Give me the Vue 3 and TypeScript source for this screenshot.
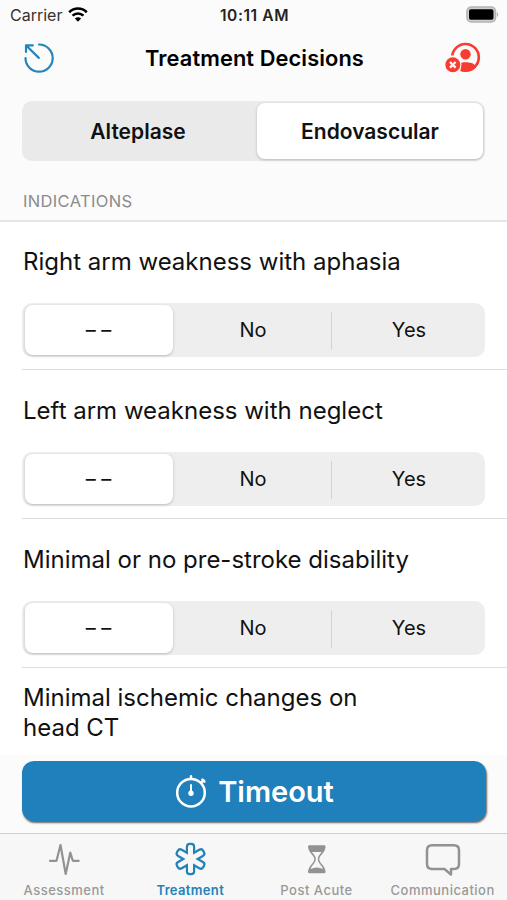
<script setup lang="ts">
import { ref } from 'vue'

const treatments = ['Alteplase', 'Endovascular']
const activeTreatment = ref('Endovascular')

interface Question {
  id: string
  lines: string[]
  answer: string
}

const options = ['– –', 'No', 'Yes']
const questions = ref<Question[]>([
  { id: 'right', lines: ['Right arm weakness with aphasia'], answer: '– –' },
  { id: 'left', lines: ['Left arm weakness with neglect'], answer: '– –' },
  { id: 'disability', lines: ['Minimal or no pre-stroke disability'], answer: '– –' },
])

const tabs = ['Assessment', 'Treatment', 'Post Acute', 'Communication']
const activeTab = ref('Treatment')
</script>

<template>
  <div class="screen">
    <header class="status">
      <div class="carrier">
        <span>Carrier</span>
        <svg class="wifi" width="20" height="16" viewBox="0 0 20 16">
          <path d="M1.200 5.200C6.300.3 13.700.3 18.800 5.200" fill="none" stroke="#000" stroke-width="2.600" />
          <path d="M4.500 8.700C7.700 5.700 12.300 5.700 15.500 8.700" fill="none" stroke="#000" stroke-width="2.500" />
          <path d="M6.900 11.500C8.700 9.900 11.300 9.900 13.100 11.500L10 14.800Z" fill="#000" />
        </svg>
      </div>
      <span class="clock">10:11 AM</span>
      <svg class="battery" width="33" height="17" viewBox="0 0 33 17">
        <rect x="1" y="1" width="28.500" height="15" rx="4.300" fill="#d0d0d0" stroke="#b3b3b3" stroke-width="1.600" />
        <rect x="3" y="3.200" width="24.500" height="10.600" rx="1.800" fill="#000" />
        <path d="M31 6q2.200 2.500 0 5z" fill="#a9a9a9" />
      </svg>
    </header>

    <nav class="navbar">
      <svg class="reset" width="32" height="32" viewBox="0 0 32 32" fill="none" stroke="#2585bb" stroke-width="2.200" stroke-linecap="round" stroke-linejoin="round">
        <path d="M16 2.500A13.600 13.600 0 1 1 2.500 16" />
        <path d="M15.800 15.900L3.200 3.500M3 10V3.300H9.800" />
      </svg>
      <h1>Treatment Decisions</h1>
      <svg class="person" width="36" height="32" viewBox="0 0 36 32">
        <circle cx="20.500" cy="15.300" r="13.300" fill="none" stroke="#f93c31" stroke-width="2.700" />
        <circle cx="20.500" cy="12.300" r="5.200" fill="#f93c31" />
        <path d="M11 25.500C12 21 16 20.300 20.500 20.300S29 21 30.500 24.500A13.500 13.500 0 0 1 12 27Z" fill="#f93c31" />
        <path d="M0 13.500H9L16 24L15 32H0Z" fill="#fbfbfb" />
        <circle cx="7.800" cy="22.800" r="8.700" fill="#fbfbfb" />
        <circle cx="7.800" cy="22.800" r="7.500" fill="#f93c31" />
        <path d="M5 20l5.600 5.600m0-5.600l-5.600 5.600" stroke="#fff" stroke-width="2.200" />
      </svg>
    </nav>

    <div class="segment treatments">
      <button v-for="item in treatments" :key="item" :class="{ selected: item === activeTreatment }" @click="activeTreatment = item">
        <span>{{ item }}</span>
      </button>
    </div>

    <h2>INDICATIONS</h2>

    <main>
      <section v-for="q in questions" :key="q.id" class="question">
        <p><span v-for="line in q.lines" :key="line">{{ line }}</span></p>
        <div class="segment answers">
          <button v-for="option in options" :key="option" :class="{ selected: option === q.answer }" @click="q.answer = option">
            <span>{{ option }}</span>
          </button>
        </div>
      </section>
      <section class="question partial">
        <p><span>Minimal ischemic changes on</span><span>head CT</span></p>
      </section>
    </main>

    <div class="action">
      <button class="timeout">
        <svg width="32" height="34" viewBox="0 0 32 34" fill="none" stroke="#fff" stroke-width="2.500" stroke-linecap="round">
          <circle cx="16" cy="18.700" r="13.800" />
          <path d="M16 4V2.200M26.400 8.400l2-2" />
          <path d="M27.400 5.600l2 2" />
          <path d="M16 11v8" stroke-width="2" />
          <circle cx="16" cy="19.200" r="2.700" fill="#fff" stroke="none" />
        </svg>
        <span>Timeout</span>
      </button>
    </div>

    <footer>
      <button v-for="tab in tabs" :key="tab" class="tab" :class="{ active: tab === activeTab }" @click="activeTab = tab">
        <svg v-if="tab === 'Assessment'" width="36" height="36" viewBox="0 0 36 36" fill="none" stroke="#929292" stroke-width="2.200" stroke-linecap="round" stroke-linejoin="round">
          <path d="M4 19.800H10.500L14.500 4L19.700 33L24.300 11.500L26.800 19.800H32.700" />
        </svg>
        <svg v-else-if="tab === 'Treatment'" width="36" height="36" viewBox="0 0 36 36">
          <g fill="none" stroke="#2382b8" stroke-width="4.400">
            <rect v-for="angle in [0, 60, 120]" :key="angle" x="16" y="4" width="5" height="28" rx="1.800" :transform="`rotate(${angle} 18.5 18)`" />
          </g>
          <g fill="#f7f7f7">
            <rect v-for="angle in [0, 60, 120]" :key="angle" x="16" y="4" width="5" height="28" rx="1.800" :transform="`rotate(${angle} 18.5 18)`" />
          </g>
        </svg>
        <svg v-else-if="tab === 'Post Acute'" width="36" height="36" viewBox="-0.800 0 36 36">
          <path d="M10.500 4.200H25.500Q27 4.200 26.800 6C26.200 12 20.500 14.500 20.500 18.200S26.200 24.500 26.800 30.500Q27 32.300 25.500 32.300H10.500Q9 32.300 9.200 30.500C9.800 24.500 15.500 22 15.500 18.200S9.800 12 9.200 6Q9 4.200 10.500 4.200Z" fill="#929292" />
          <path d="M13.200 11H22.800C21.200 13.500 19 14.800 19 18.200C19 22 22.800 23.500 24.200 28C22 27.500 20.500 26.500 18 26.500S14 27.500 11.800 28C13.200 23.500 17 22 17 18.200C17 14.800 14.800 13.500 13.200 11Z" fill="#f7f7f7" />
        </svg>
        <svg v-else width="36" height="36" viewBox="0 0 36 36" fill="none" stroke="#929292" stroke-width="2.500" stroke-linejoin="round">
          <path d="M7 4.200H29Q34 4.200 34 9.200V23Q34 28 29 28H26V33.600L19.500 28H7Q2 28 2 23V9.200Q2 4.200 7 4.200Z" />
        </svg>
        <span>{{ tab }}</span>
      </button>
    </footer>
  </div>
</template>

<style>
body {
  margin: 0;
}
</style>

<style scoped>
* {
  box-sizing: border-box;
}

.screen {
  display: flex;
  flex-direction: column;
  width: 507px;
  height: 900px;
  overflow: hidden;
  background: #fbfbfb;
  color: #111;
  font-family: Inter, 'Liberation Sans', sans-serif;
}

button {
  border: 0;
  padding: 0;
  margin: 0;
  background: none;
  color: inherit;
  font: inherit;
}

span {
  white-space: nowrap;
}

.status {
  display: grid;
  grid-template-columns: 1fr auto 1fr;
  align-items: center;
  flex: none;
  height: 30px;
  padding: 0 8px 0 10px;
}

.carrier {
  display: flex;
  align-items: center;
  gap: 6px;
  color: #333;
  font-size: 16px;
}

.wifi {
  margin-top: -1px;
}

.clock {
  color: #222;
  font-size: 15.5px;
  font-weight: 600;
  letter-spacing: 0.6px;
}

.battery {
  justify-self: end;
  margin-top: -2px;
}

.navbar {
  display: grid;
  grid-template-columns: 60px 1fr 60px;
  align-items: center;
  flex: none;
  height: 56px;
  padding: 0 24px 0 23px;
}

h1 {
  margin: -1px 0 0 3px;
  color: #000;
  font-size: 21.8px;
  font-weight: 600;
  letter-spacing: 0.1px;
  line-height: 30px;
  text-align: center;
  white-space: nowrap;
}

.person {
  justify-self: end;
  margin-right: 2px;
}

.segment {
  display: flex;
  flex: none;
  width: 463px;
  background: #eee;
  border-radius: 10px;
}

.segment button {
  display: flex;
  align-items: center;
  justify-content: center;
}

.segment .selected {
  background: #fff;
  border-radius: 8px;
  box-shadow: 0 1px 3px rgba(0, 0, 0, 0.22);
}

.treatments {
  height: 60px;
  margin: 15px 0 0 22px;
  padding: 2px;
  background: #eaeaea;
  font-size: 21px;
  font-weight: 600;
}

.treatments button {
  width: 226px;
}

.treatments button:first-child {
  width: 233px;
  padding-right: 5px;
}

h2 {
  flex: none;
  height: 61px;
  margin: 0;
  padding: 30px 0 0 23px;
  border-bottom: 2px solid #e6e6e6;
  color: #8b8b8b;
  font-size: 16.5px;
  font-weight: 400;
  letter-spacing: 0.35px;
  line-height: 20px;
}

main {
  flex: none;
  height: 533px;
  overflow: hidden;
  background: #fff;
}

.question {
  height: 149px;
  margin-left: 22px;
  border-bottom: 1px solid #ddd;
}

.question:first-child {
  height: 148px;
}

.question p {
  display: flex;
  flex-direction: column;
  justify-content: center;
  height: 82px;
  margin: 0;
  padding-left: 1px;
  font-size: 24px;
  line-height: 30px;
}

.question:first-child p {
  height: 81px;
  padding-bottom: 1px;
}

.question.partial {
  height: 87px;
  border-bottom: 0;
}

.question.partial p {
  height: auto;
  padding-top: 15px;
}

.answers {
  height: 54px;
  padding: 2px 0 2px 3px;
  font-size: 20px;
}

.answers button {
  position: relative;
  width: 156px;
}

.answers button:nth-child(2) {
  margin-left: 2px;
}

.answers button:first-child {
  width: 148px;
  padding-right: 1px;
}

.answers button:last-child {
  width: 154px;
  padding-left: 2px;
}

.answers button:last-child::before {
  position: absolute;
  top: 7px;
  left: 0;
  width: 1px;
  height: 38px;
  background: #d2d2d2;
  content: '';
}

.action {
  flex: none;
  height: 78px;
  padding: 6px 21px 0 22px;
}

.timeout {
  display: flex;
  align-items: center;
  justify-content: center;
  gap: 11px;
  width: 100%;
  height: 60px;
  padding-left: 1px;
  border-radius: 12px;
  background: #2080bc;
  box-shadow: 1px 2px 2px rgba(0, 0, 0, 0.6);
  color: #fff;
  font-size: 29px;
  font-weight: 600;
}

footer {
  display: grid;
  grid-template-columns: repeat(4, 126.2px);
  flex: none;
  height: 67px;
  padding-left: 1px;
  border-top: 1px solid #cfcfcf;
  background: #f7f7f7;
}

.tab {
  display: flex;
  flex-direction: column;
  align-items: center;
  padding-top: 7px;
  color: #999;
  font-size: 13px;
  font-weight: 500;
  letter-spacing: 0.5px;
}

.tab span {
  margin-top: 5px;
  line-height: 16px;
}

.tab.active {
  color: #2382b8;
  font-weight: 600;
  letter-spacing: 0.35px;
}
</style>
